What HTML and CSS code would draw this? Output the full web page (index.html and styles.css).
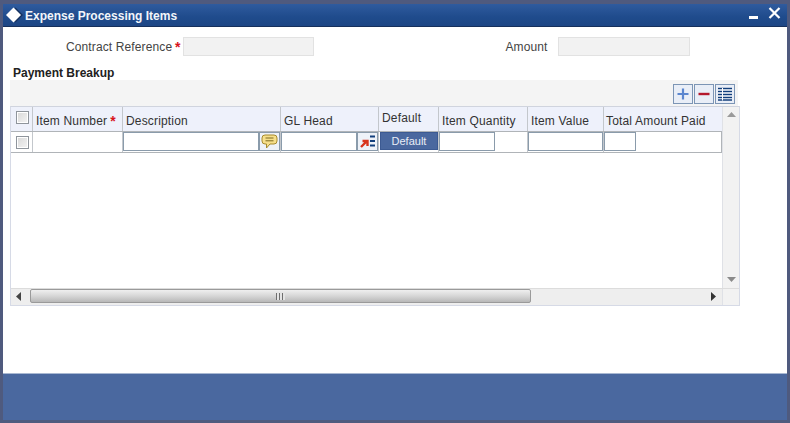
FILE: index.html
```html
<!DOCTYPE html>
<html lang="en">
<head>
<meta charset="utf-8">
<title>Expense Processing Items</title>
<link rel="stylesheet" href="styles.css">
</head>
<body>
<div class="window">
  <header class="titlebar">
    <svg class="logo" width="20" height="18" viewBox="0 0 20 18"><path d="M10.5 1.5 L18 9 L10.5 16.5 L3 9 Z" fill="#14305f"/><path d="M8.5 1.5 L16 9 L8.5 16.5 L1 9 Z" fill="#fff"/></svg>
    <span class="title">Expense Processing Items</span>
    <span class="window-actions">
      <svg width="10" height="5" viewBox="0 0 10 5" class="min"><rect width="9" height="3" y="1" fill="#fff"/></svg>
      <svg width="13" height="12" viewBox="0 0 13 12" class="close"><path d="M1.5 1 L11.5 11 M11.5 1 L1.5 11" stroke="#fff" stroke-width="2.2" fill="none"/></svg>
    </span>
  </header>
  <main class="content">
    <div class="fields">
      <label class="label label-ref">Contract Reference</label><span class="star">*</span>
      <span class="ro-input ref-input"></span>
      <label class="label label-amt">Amount</label>
      <span class="ro-input amt-input"></span>
    </div>
    <h2 class="section">Payment Breakup</h2>
    <div class="toolbar">
      <button class="tool"><svg width="14" height="14" viewBox="0 0 14 14"><path d="M7 1.5V12.5M1.5 7H12.5" stroke="#5b86cf" stroke-width="2.2"/></svg></button>
      <button class="tool"><svg width="14" height="14" viewBox="0 0 14 14"><path d="M1.5 7H12.5" stroke="#b5182c" stroke-width="2.4"/></svg></button>
      <button class="tool"><svg width="16" height="14" viewBox="0 0 16 14"><path d="M1 0.5h14v13H1z" fill="#fff"/><path d="M1 1.5H15M1 4.5H15M1 7.5H15M1 10.5H15M1 13H15" stroke="#123f7c" stroke-width="1.6"/><path d="M5.5 1V13.5" stroke="#fff"/></svg></button>
    </div>
    <div class="grid-box">
      <div class="grid-main">
        <div class="grid-rows">
          <div class="row head">
            <div class="cell c0"><span class="check"></span></div>
            <div class="cell c1">Item Number<span class="star star-h">*</span></div>
            <div class="cell c2">Description</div>
            <div class="cell c3">GL Head</div>
            <div class="cell c4 raised">Default</div>
            <div class="cell c5">Item Quantity</div>
            <div class="cell c6">Item Value</div>
            <div class="cell c7">Total Amount Paid</div>
          </div>
          <div class="row body">
            <div class="cell c0"><span class="check"></span></div>
            <div class="cell c1"></div>
            <div class="cell c2 inner"><span class="input desc-input"></span><span class="mini-btn"><svg width="17" height="15" viewBox="0 0 17 15"><path d="M4 1H13Q16 1 16 4V7Q16 10 13 10H9L5.5 14V10H4Q1 10 1 7V4Q1 1 4 1Z" fill="#f6df8a" stroke="#a68a2c"/><path d="M4.5 4H12.5M4.5 6.8H12.5" stroke="#7d6a20"/></svg></span></div>
            <div class="cell c3 inner"><span class="input gl-input"></span><span class="mini-btn"><svg width="18" height="15" viewBox="0 0 18 15"><path d="M2 13L7 8M3.5 7H8.5V12" stroke="#d8341c" stroke-width="2.4" fill="none"/><path d="M11 2.5H16M11 7H16M11 11.5H16" stroke="#123f7c" stroke-width="2"/></svg></span></div>
            <div class="cell c4 inner"><button class="default-btn">Default</button></div>
            <div class="cell c5 inner"><span class="input qty-input"></span></div>
            <div class="cell c6 inner"><span class="input val-input"></span></div>
            <div class="cell c7 inner"><span class="input paid-input"></span></div>
          </div>
        </div>
        <div class="vscroll">
          <svg width="9" height="5" viewBox="0 0 9 5"><path d="M4.5 0L9 5H0Z" fill="#9a9a9a"/></svg>
          <svg width="9" height="5" viewBox="0 0 9 5"><path d="M4.5 5L9 0H0Z" fill="#8a8a8a"/></svg>
        </div>
      </div>
      <div class="hscroll">
        <svg class="arrow-l" width="5" height="9" viewBox="0 0 5 9"><path d="M0 4.5L5 0V9Z" fill="#444"/></svg>
        <div class="thumb"><span class="grip"></span></div>
        <svg class="arrow-r" width="5" height="9" viewBox="0 0 5 9"><path d="M5 4.5L0 0V9Z" fill="#333"/></svg>
        <span class="corner"></span>
      </div>
    </div>
  </main>
  <footer class="footer"></footer>
</div>
</body>
</html>
```
FILE: styles.css
```css
* { box-sizing: border-box; }
html, body { margin: 0; padding: 0; }
body { width: 790px; height: 423px; overflow: hidden; background: #4f5a7e; font-family: "Liberation Sans", Arial, sans-serif; font-size: 12px; color: #333; }
.window { height: 423px; padding: 4px 3px 3px 3px; display: flex; flex-direction: column; }
.titlebar { height: 23px; flex: none; display: flex; align-items: center; padding: 0 6px 0 2px; background: linear-gradient(#2f5b9e, #1f4b8c 60%, #1d4685); border-bottom: 1px solid #16305c; color: #fff; }
.logo { margin-top: -1px; }
.title { font-weight: bold; font-size: 12px; color: #f2f5fa; margin-top: 1px; }
.window-actions { margin-left: auto; display: flex; align-items: center; gap: 9px; }
.min { margin-top: 5px; }
.close { margin-top: -4px; }
.content { flex: 1; background: #fff; display: flex; flex-direction: column; }
.fields { display: flex; align-items: center; height: 19px; margin-top: 10px; }
.label { color: #444; letter-spacing: 0.12px; }
.label-ref { margin-left: 63px; width: 106px; white-space: nowrap; }
.star { color: #d8141c; font-weight: bold; font-size: 14px; line-height: 12px; }
.fields .star { margin-left: 3px; }
.ro-input { display: block; height: 19px; background: #f2f2f2; border: 1px solid #e2e2e2; }
.ref-input { width: 131px; margin-left: 3px; }
.label-amt { margin-left: 191px; width: 53px; }
.amt-input { width: 132px; }
.section { margin: 10px 0 0 10px; font-size: 12px; line-height: 14px; font-weight: bold; color: #222; }
.toolbar { margin: 0 0 0 7px; width: 728px; height: 26px; background: #f4f4f4; display: flex; justify-content: flex-end; align-items: center; gap: 1px; padding: 2px 3px 0 0; }
.tool { width: 20px; height: 20px; padding: 0; background: #e9eef7; border: 1px solid #7c95b5; display: flex; align-items: center; justify-content: center; }
.grid-box { margin-left: 7px; width: 730px; height: 200px; border: 1px solid #d6dae6; border-top-color: #d0d4de; display: flex; flex-direction: column; }
.grid-main { flex: 1; display: flex; min-height: 0; }
.grid-rows { width: 711px; flex: none; }
.row { display: grid; grid-template-columns: 22px 90px 158px 98px 60px 89px 76px 118px; }
.row.head { height: 25px; background: #eef1fb; border-bottom: 1px solid #b0b4b8; }
.row.body { height: 21px; border-bottom: 1px solid #b0b4b8; border-right: 1px solid #b0b4b8; }
.cell { border-right: 1px solid #c3c7cc; display: flex; align-items: center; padding-left: 3px; white-space: nowrap; color: #333; padding-top: 3px; letter-spacing: 0.17px; }
.head .raised { padding-top: 0; padding-bottom: 2px; }
.head .c7 { border-right: none; padding-left: 2px; }
.body .cell { padding-top: 0; }
.body .c7 { border-right: none; }
.c0 { padding-left: 5px; padding-top: 0; background: #eef1fb; }
.head .c0 { padding-top: 0; padding-bottom: 3px; }
.body .c0 { background: #fff; }
.star-h { margin-left: 3px; }
.check { display: block; width: 13px; height: 13px; border: 1px solid #8f959c; background: linear-gradient(135deg, #d8d8d8, #f4f4f4); box-shadow: inset 0 0 0 1px #fff; }
.inner { padding: 0; align-items: stretch; }
.input { display: block; background: #fff; border: 1px solid #8a9bab; height: 19px; }
.desc-input { width: 136px; }
.gl-input { width: 76px; }
.qty-input { width: 56px; }
.val-input { width: 75px; }
.paid-input { width: 32px; }
.mini-btn { width: 21px; height: 19px; background: #eef2f8; border: 1px solid #8a9bab; display: flex; align-items: center; justify-content: center; }
.default-btn { width: 58px; height: 18px; margin-left: 1px; padding: 0; border: 1px solid #3c5a92; background: #4a689f; color: #e8edf6; font: 11px "Liberation Sans", Arial, sans-serif; }
.vscroll { flex: 1; background: #f2f2f2; border-left: 1px solid #dfe1e6; display: flex; flex-direction: column; justify-content: space-between; align-items: center; padding: 5px 0 6px; }
.hscroll { height: 17px; flex: none; background: #eeeeee; border-top: 1px solid #dcdcdc; display: flex; align-items: center; padding-left: 5px; width: 100%; }
.arrow-l, .arrow-r { margin-bottom: 2px; }
.thumb { width: 501px; height: 14px; margin-left: 9px; margin-bottom: 2px; background: linear-gradient(#efefef, #d6d6d6 50%, #b8b8b8); border: 1px solid #9a9a9a; border-radius: 2px; display: flex; align-items: center; justify-content: center; }
.grip { display: block; width: 9px; height: 7px; background: repeating-linear-gradient(90deg, #6e6e6e 0 1px, #e4e4e4 1px 3px); }
.arrow-r { margin-left: 180px; }
.corner { margin-left: auto; width: 17px; align-self: stretch; background: #f2f2f2; border-left: 1px solid #dfe1e6; }
.footer { height: 47px; flex: none; background: #4a689f; border-top: 1px solid #a9b8d2; }
```
